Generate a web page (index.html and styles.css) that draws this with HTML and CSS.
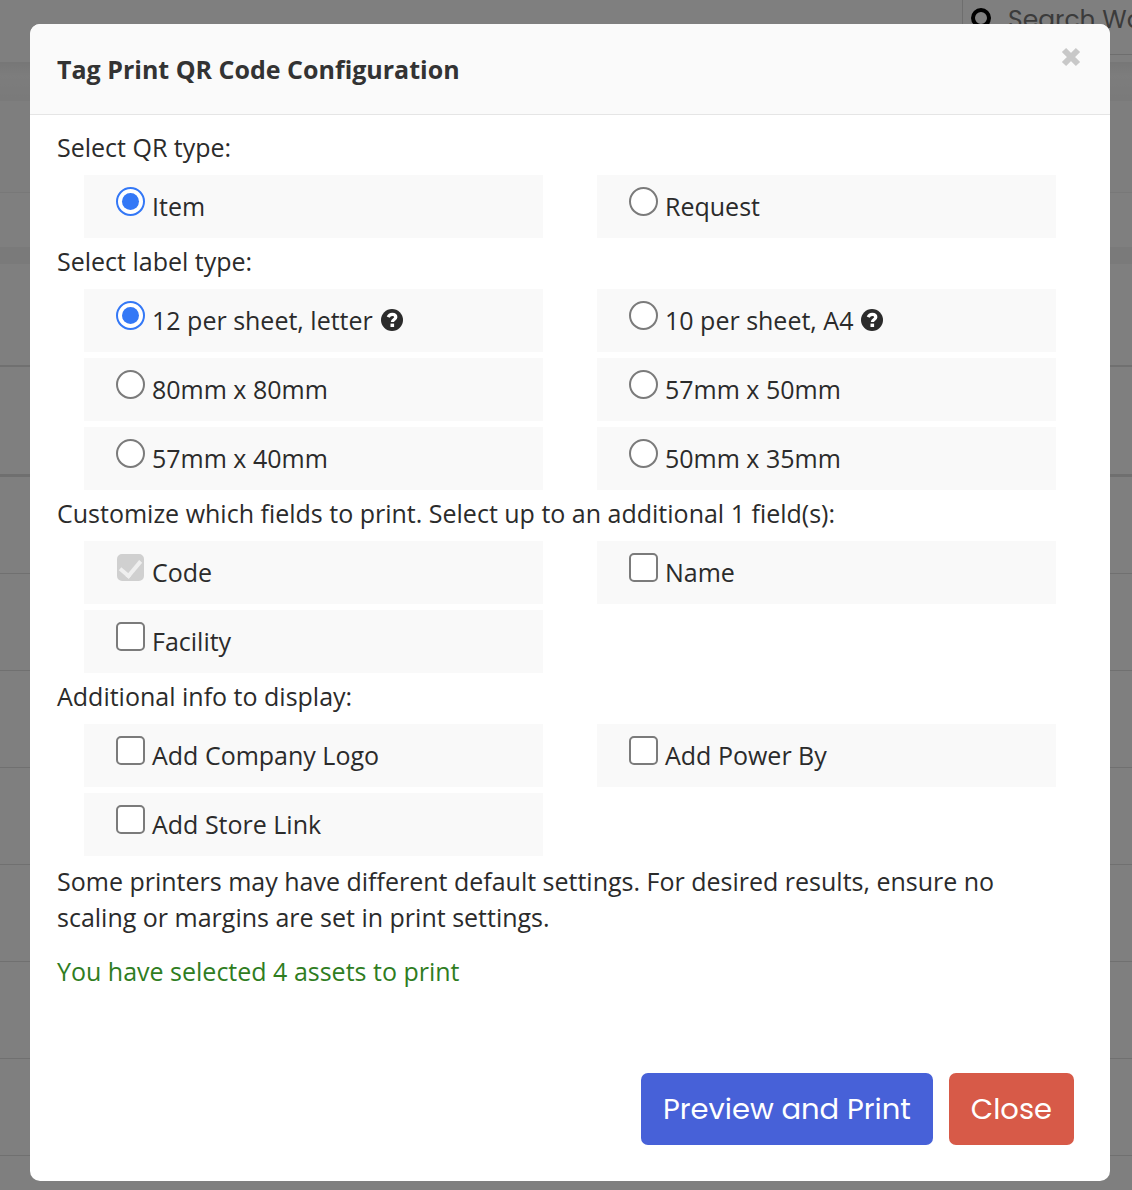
FILE: index.html
```
<!DOCTYPE html>
<html lang="en">
<head>
    <meta charset="UTF-8">
    <meta name="viewport" content="width=device-width, initial-scale=1.0">
    <title>Tag Print QR Code Configuration</title>
    <link rel="stylesheet" href="styles.css">
</head>
<body>
    <div class="page" inert>
        <header class="topbar">
            <div class="search">
                <svg class="search-icon" viewBox="0 0 28 28" aria-hidden="true">
                    <circle cx="11" cy="11" r="8" fill="none" stroke="#000" stroke-width="4"/>
                    <path d="M17 17l8 8" stroke="#000" stroke-width="4" stroke-linecap="round"/>
                </svg>
                <input class="search-input" type="text" placeholder="Search Work Orders" aria-label="Search Work Orders">
            </div>
        </header>
        <div class="filters">
            <div class="filter-top"></div>
            <div class="filter-bottom"></div>
        </div>
        <div class="list">
            <div class="list-title"></div>
            <div class="list-head"></div>
            <div class="list-row"></div>
            <div class="list-row"></div>
            <div class="list-row"></div>
            <div class="list-row"></div>
            <div class="list-row"></div>
            <div class="list-row"></div>
            <div class="list-row"></div>
        </div>
    </div>

    <div class="overlay">
        <form class="modal" role="dialog" aria-labelledby="modal-title">
            <div class="modal-header">
                <h1 class="modal-title" id="modal-title">Tag Print QR Code Configuration</h1>
                <button class="modal-x" type="button" aria-label="Dismiss">
                    <svg viewBox="0 0 24 22" aria-hidden="true">
                        <path d="M5 4l14 14M19 4L5 18" stroke="#c8c8c8" stroke-width="6"/>
                    </svg>
                </button>
            </div>

            <div class="modal-body">
                <fieldset class="group">
                    <legend>Select QR type:</legend>
                    <div class="options">
                        <label class="option"><input type="radio" name="qr" checked><span>Item</span></label>
                        <label class="option"><input type="radio" name="qr"><span>Request</span></label>
                    </div>
                </fieldset>

                <fieldset class="group">
                    <legend>Select label type:</legend>
                    <div class="options">
                        <label class="option">
                            <input type="radio" name="size" checked><span>12 per sheet, letter</span>
                            <svg class="help" viewBox="0 0 22 22" aria-hidden="true">
                                <circle cx="11" cy="11" r="11" fill="#2b2b2b"/>
                                <path d="M7.200 8.200C8 6.200 9.400 5.400 11.200 5.400c2.200 0 3.600 1.200 3.600 2.900 0 2.200-3.400 2.300-3.400 4.700" fill="none" stroke="#fff" stroke-width="3.200"/>
                                <rect x="9.500" y="14.600" width="3.600" height="3.400" fill="#fff"/>
                            </svg>
                        </label>
                        <label class="option">
                            <input type="radio" name="size"><span>10 per sheet, A4</span>
                            <svg class="help" viewBox="0 0 22 22" aria-hidden="true">
                                <circle cx="11" cy="11" r="11" fill="#2b2b2b"/>
                                <path d="M7.200 8.200C8 6.200 9.400 5.400 11.200 5.400c2.200 0 3.600 1.200 3.600 2.900 0 2.200-3.400 2.300-3.400 4.700" fill="none" stroke="#fff" stroke-width="3.200"/>
                                <rect x="9.500" y="14.600" width="3.600" height="3.400" fill="#fff"/>
                            </svg>
                        </label>
                        <label class="option"><input type="radio" name="size"><span>80mm x 80mm</span></label>
                        <label class="option"><input type="radio" name="size"><span>57mm x 50mm</span></label>
                        <label class="option"><input type="radio" name="size"><span>57mm x 40mm</span></label>
                        <label class="option"><input type="radio" name="size"><span>50mm x 35mm</span></label>
                    </div>
                </fieldset>

                <fieldset class="group">
                    <legend>Customize which fields to print. Select up to an additional 1 field(s):</legend>
                    <div class="options">
                        <label class="option"><input type="checkbox" checked disabled><span>Code</span></label>
                        <label class="option"><input type="checkbox"><span>Name</span></label>
                        <label class="option"><input type="checkbox"><span>Facility</span></label>
                    </div>
                </fieldset>

                <fieldset class="group">
                    <legend>Additional info to display:</legend>
                    <div class="options">
                        <label class="option"><input type="checkbox"><span>Add Company Logo</span></label>
                        <label class="option"><input type="checkbox"><span>Add Power By</span></label>
                        <label class="option"><input type="checkbox"><span>Add Store Link</span></label>
                    </div>
                </fieldset>

                <p class="note">Some printers may have different default settings. For desired results, ensure no scaling or margins are set in print settings.</p>
                <p class="note selected">You have selected 4 assets to print</p>
            </div>

            <div class="modal-footer">
                <button class="btn btn-primary" type="button">Preview and Print</button>
                <button class="btn btn-danger" type="button">Close</button>
            </div>
        </form>
    </div>
</body>
</html>
```

FILE: styles.css
```
* {
    box-sizing: border-box;
}
body {
    margin: 0;
    height: 100vh;
    overflow: hidden;
    background: #fff;
    color: #2b2b2b;
    font-family: "Open Sans", "Noto Sans", sans-serif;
    font-size: 25px;
    line-height: 36px;
}

/* page behind the modal */
.topbar {
    display: flex;
    justify-content: flex-end;
    height: 62px;
    padding-bottom: 7px;
}
.search {
    display: flex;
    width: 170px;
    padding: 7px 0 0 7px;
    border-left: 1px solid #ddd;
    border-bottom: 1px solid #ddd;
}
.search-icon {
    flex: none;
    width: 28px;
    height: 28px;
}
.search-input {
    width: 100%;
    height: 26px;
    min-width: 0;
    padding: 0;
    margin-left: 10px;
    border: 0;
    background: none;
    font-family: Poppins, Inter, sans-serif;
    font-size: 25px;
}
.search-input::placeholder {
    color: #777;
}
.filters {
    padding-top: 39px;
    background: linear-gradient(#eee, #fafafa 14px, #f4f4f4 39px);
}
.filter-top {
    height: 92px;
    background: #fcfcfc;
    border-bottom: 1px solid #f0f0f0;
}
.filter-bottom {
    height: 54px;
    background: #fff;
}
.list {
    padding-top: 17px;
    background: #f4f4f4;
}
.list > div {
    background: #fff;
}
.list-title {
    height: 103px;
    border-bottom: 2px solid #e0e0e0;
}
.list-head {
    height: 110px;
    border-bottom: 3px solid #dedede;
}
.list-row {
    height: 97px;
    border-bottom: 1px solid #e0e0e0;
}

/* modal */
.overlay {
    position: fixed;
    inset: 0;
    padding: 24px 22px 9px 30px;
    overflow: hidden;
    background: rgba(0, 0, 0, 0.5);
}
.modal {
    overflow: hidden;
    background: #fff;
    border-radius: 10px;
}
.modal-header {
    display: flex;
    justify-content: space-between;
    align-items: flex-start;
    padding: 22px 27px;
    background: #fafafa;
    border-bottom: 1px solid #e5e5e5;
}
.modal-title {
    margin: 4px 0;
    font-size: 25px;
    line-height: 38px;
    font-weight: 700;
    color: #333;
}
.modal-x {
    display: flex;
    padding: 0;
    border: 0;
    background: none;
    cursor: pointer;
}
.modal-x svg {
    width: 24px;
    height: 22px;
}
.modal-body {
    padding: 14px 27px 0;
}
.group {
    margin: 0;
    padding: 0;
    border: 0;
    min-width: 0;
}
.group legend {
    height: 46px;
    padding: 0;
}
.options {
    display: grid;
    grid-template-columns: 1fr 1fr;
    column-gap: 54px;
    row-gap: 6px;
    padding: 0 27px 5px;
}
.option {
    display: flex;
    align-items: center;
    height: 63px;
    padding: 0 32px 2px;
    background: #f9f9f9;
}
.option input {
    appearance: none;
    display: grid;
    place-items: center;
    width: 29px;
    height: 29px;
    margin: 0 7px 8px 0;
    border: 2px solid #7b7b7b;
    border-radius: 5px;
    background: #fff;
}
.option input[type="radio"] {
    border-radius: 50%;
}
.option input[type="radio"]:checked {
    border-color: #3478f6;
}
.option input[type="radio"]:checked::before {
    content: "";
    width: 17px;
    height: 17px;
    border-radius: 50%;
    background: #3478f6;
}
.option input:disabled {
    width: 27px;
    height: 27px;
    margin-left: 1px;
    margin-right: 8px;
    border-color: #d0d0d0;
    background: #d0d0d0;
}
.option input:disabled::before {
    content: "";
    width: 9px;
    height: 17px;
    margin-bottom: 4px;
    border: solid #efefef;
    border-width: 0 4px 4px 0;
    transform: rotate(40deg);
}
.help {
    width: 22px;
    height: 22px;
    margin-left: 8px;
}
.note {
    margin: 2px 0 18px;
    padding-right: 27px;
}
.selected {
    color: #2f7d1f;
}
.modal-footer {
    display: flex;
    justify-content: flex-end;
    gap: 16px;
    padding: 66px 36px 36px;
}
.btn {
    height: 72px;
    padding: 0 22px;
    border: 0;
    border-radius: 7px;
    color: #fff;
    font-family: Poppins, Inter, sans-serif;
    font-size: 29px;
    cursor: pointer;
}
.btn-primary {
    background: #4761d8;
}
.btn-danger {
    background: #d75a48;
}
```
